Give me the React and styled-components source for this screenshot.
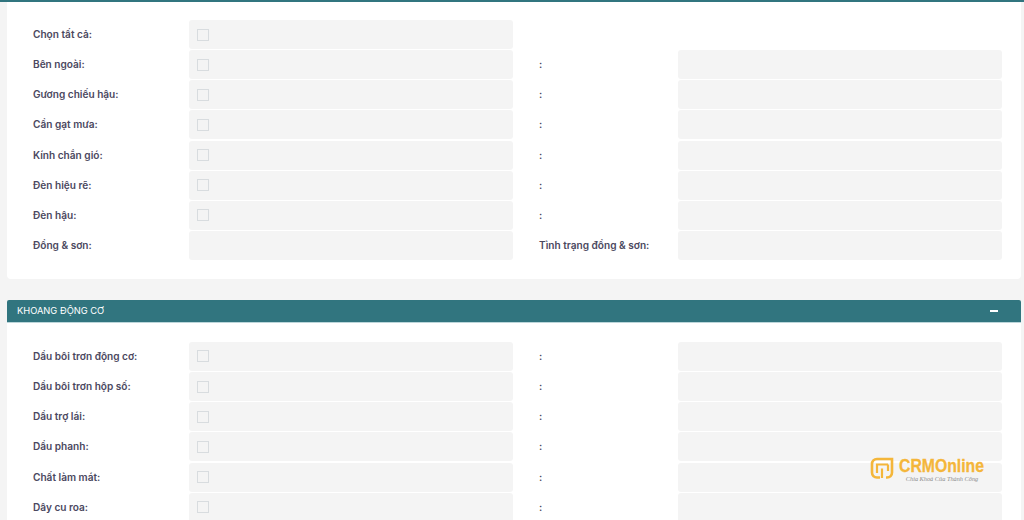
import React from 'react';
import styled, { createGlobalStyle } from 'styled-components';

const GlobalStyle = createGlobalStyle`
  html, body { margin: 0; padding: 0; background: #f4f4f4; }
  body { height: 520px; overflow: hidden; font-family: Inter, "Liberation Sans", sans-serif; }
`;

const Page = styled.div`
  position: relative;
  width: 1024px;
  height: 520px;
  overflow: hidden;
  border-top: 2px solid #31757f;
  box-sizing: border-box;
  padding: 0 3px 0 7px;
`;

const Panel = styled.section`
  background: #fff;
  border-radius: 0 0 4px 4px;
  padding: ${p => p.$top}px 19px 19px 26px;
  margin-bottom: ${p => p.$gap || 0}px;
`;

const PanelHeader = styled.header`
  display: flex;
  align-items: center;
  justify-content: space-between;
  height: 23px;
  box-sizing: border-box;
  padding: 0 23px 0 10px;
  background: #31757f;
  border-radius: 2px 2px 0 0;
  border-bottom: 1px solid #bcd6da;
  color: #fff;
  font-size: 9.3px;
`;

const Minus = styled.span`
  display: block;
  width: 8px;
  height: 2px;
  background: #fff;
`;

const Rows = styled.div`
  display: flex;
  flex-direction: column;
  gap: 1.15px;
`;

const Row = styled.div`
  display: grid;
  grid-template-columns: 156px 324px 27px 138px 324px;
  height: 29px;
  align-items: center;
`;

const Label = styled.label`
  font-size: 10.1px;
  font-weight: 600;
  color: #4b4860;
  white-space: nowrap;
  padding-bottom: 1px;
`;

const Field = styled.div`
  grid-column: ${p => p.$col};
  height: 29px;
  box-sizing: border-box;
  padding-left: 8px;
  display: flex;
  align-items: center;
  background: #f4f4f4;
  border-radius: 3px;
`;

const CheckBox = styled.span`
  display: block;
  width: 10px;
  height: 10px;
  background: #f4f4f4;
  border: 1px solid #d8dcdf;
`;

const RightLabel = styled(Label)`
  grid-column: 3 / 5;
  padding-left: 26px;
`;

const Logo = styled.div`
  position: absolute;
  left: 870px;
  top: 455px;
  display: flex;
  gap: 5px;
  align-items: flex-start;
`;

const LogoText = styled.div`
  display: flex;
  flex-direction: column;
  align-items: center;
  width: 86px;
`;

const LogoName = styled.span`
  font-family: "Liberation Sans", sans-serif;
  font-weight: 700;
  font-size: 19px;
  line-height: 18px;
  color: #f4b63a;
  -webkit-text-stroke: 0.3px #f4b63a;
  transform: scaleX(0.83);
  transform-origin: left;
  width: 86px;
  white-space: nowrap;
`;

const Slogan = styled.span`
  font-family: "Liberation Serif", serif;
  font-style: italic;
  font-size: 6.3px;
  line-height: 8px;
  color: #8a8a8a;
  white-space: nowrap;
`;

const LogoMark = () => (
  <svg width="24" height="23" viewBox="0 0 24 23" fill="none">
    <path d="M10 20.5H7c-3 0-5-2-5-5V7c0-3 2-5 5-5h15v13.500c0 3-2 5-5 5h-1" stroke="#f4b63a" strokeWidth="2.6" />
    <path d="M7 16V7.500H18M12 11.500V21M18 7.500V14" stroke="#f4b63a" strokeWidth="2.2" />
  </svg>
);

const FormRow = ({ label, side, checkbox = true, colon = true }) => (
  <Row>
    <Label>{label}</Label>
    <Field $col="2">{checkbox && <CheckBox />}</Field>
    {colon && <RightLabel>{side || ':'}</RightLabel>}
    {colon && <Field $col="5" />}
  </Row>
);

const outside = ['Bên ngoài:', 'Gương chiếu hậu:', 'Cần gạt mưa:', 'Kính chắn gió:', 'Đèn hiệu rẽ:', 'Đèn hậu:'];
const engine = ['Dầu bôi trơn động cơ:', 'Dầu bôi trơn hộp số:', 'Dầu trợ lái:', 'Dầu phanh:', 'Chất làm mát:', 'Dây cu roa:'];

export default function App() {
  return (
    <>
      <GlobalStyle />
      <Page>
        <Panel $top={18} $gap={21}>
          <Rows>
            <FormRow label="Chọn tất cả:" colon={false} />
            {outside.map(l => <FormRow key={l} label={l} />)}
            <FormRow label="Đồng & sơn:" side="Tình trạng đồng & sơn:" checkbox={false} />
          </Rows>
        </Panel>
        <PanelHeader>
          <span>KHOANG ĐỘNG CƠ</span>
          <Minus />
        </PanelHeader>
        <Panel $top={19}>
          <Rows>
            {engine.map(l => <FormRow key={l} label={l} />)}
          </Rows>
        </Panel>
        <Logo>
          <LogoMark />
          <LogoText>
            <LogoName>CRMOnline</LogoName>
            <Slogan>Chìa Khoá Của Thành Công</Slogan>
          </LogoText>
        </Logo>
      </Page>
    </>
  );
}
